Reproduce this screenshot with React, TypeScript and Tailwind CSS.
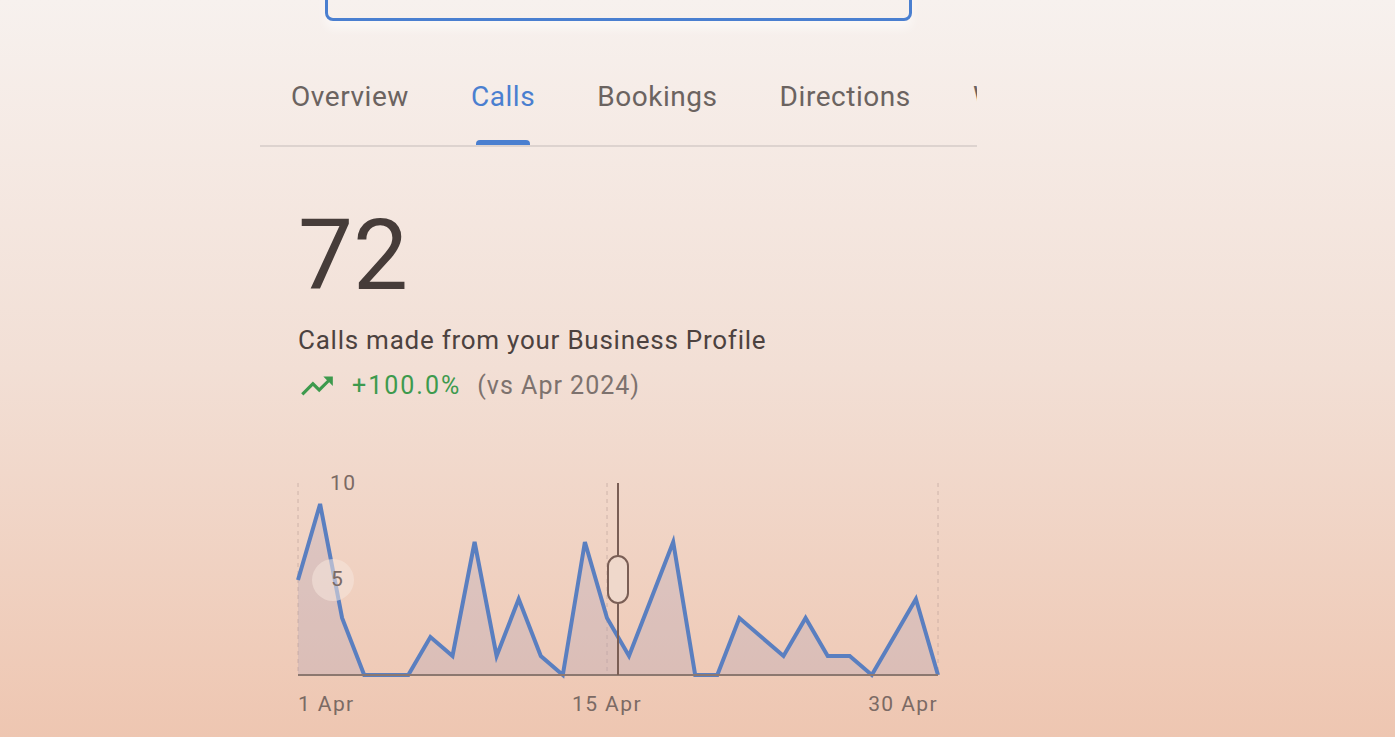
import React from 'react'

const calls = [5, 9, 3, 0, 0, 0, 2, 1, 7, 1, 4, 1, 0, 7, 3, 1, 4, 7, 0, 0, 3, 2, 1, 3, 1, 1, 0, 2, 4, 0]

const tabs = ['Overview', 'Calls', 'Bookings', 'Directions', 'Website clicks']

const W = 640
const BASE = 205
const UNIT = 19

function CallsChart() {
  const pts = calls.map((v, i) => [(i * W) / (calls.length - 1), BASE - v * UNIT])
  const line = pts.map(([x, y], i) => `${i ? 'L' : 'M'}${x.toFixed(1)} ${y}`).join(' ')
  const area = `${line} L${W} ${BASE} L0 ${BASE} Z`

  return (
    <svg width="660" height="250" viewBox="0 0 660 250" className="overflow-visible block">
      {[0, 309, W].map((x) => (
        <line key={x} x1={x} x2={x} y1={13} y2={BASE} stroke="#b89f96" strokeOpacity="0.6" strokeWidth="1" strokeDasharray="4 4" />
      ))}
      <path d={area} fill="#a99fb6" fillOpacity="0.28" />
      <path d={line} fill="none" stroke="#5a7fc0" strokeWidth="4" strokeLinejoin="miter" />
      <line x1={0} x2={W} y1={BASE} y2={BASE} stroke="#8c7870" strokeWidth="2" />
      <circle cx={35} cy={110} r={21} fill="#f6e6dd" fillOpacity="0.55" />
      <g fontSize="21" fill="#7b6a64" fontFamily="Roboto, sans-serif" letterSpacing="1.4">
        <text x={32} y={20}>10</text>
        <text x={33} y={116}>5</text>
        <text x={0} y={241}>1 Apr</text>
        <text x={309} y={241} textAnchor="middle">15 Apr</text>
        <text x={W} y={241} textAnchor="end">30 Apr</text>
      </g>
      <line x1={320} x2={320} y1={13} y2={BASE} stroke="#7a5e55" strokeWidth="2" />
      <rect x={310} y={86} width={20} height={47} rx={10} fill="#efd8cb" stroke="#7a5e55" strokeWidth="2" />
    </svg>
  )
}

export default function App() {
  return (
    <div className="h-[737px] w-full overflow-hidden bg-linear-to-b from-[#f7f1ee] via-[#f2dfd5] to-[#eec6b1] font-['Roboto',sans-serif]">
      <div className="ml-[260px] w-[717px]">
        <div className="ml-[65px] -mt-[39px] h-[60px] w-[587px] rounded-[8px] border-[3px] border-[#4a7fd0] shadow-[0_8px_10px_rgba(255,255,255,0.5)]" />

        <div className="flex overflow-hidden border-b-2 border-[#ddd3cf]">
          {tabs.map((t) => {
            const active = t === 'Calls'
            return (
              <div key={t} className="flex shrink-0 flex-col items-center px-[31px]">
                <span
                  className={`pt-[60px] text-[28px] leading-[32px] tracking-[0.55px] whitespace-nowrap ${
                    active ? 'text-[#4a7fd0]' : 'text-[#6b6360]'
                  }`}
                >
                  {t}
                </span>
                <div className={`mt-[27px] h-[5px] w-[54px] rounded-t-[4px] ${active ? 'bg-[#4a7fd0]' : 'bg-transparent'}`} />
              </div>
            )
          })}
        </div>

        <div className="pl-[38px]">
          <div className="mt-[60px] text-[98px] leading-[98px] text-[#463c39]">72</div>
          <div className="mt-[19px] text-[26px] leading-[32px] tracking-[0.75px] text-[#4c423f]">
            Calls made from your Business Profile
          </div>
          <div className="mt-[14px] flex h-[32px] items-center">
            <svg width="38" height="38" viewBox="0 0 24 24" className="shrink-0">
              <path fill="#3d9a4d" d="M16 6l2.29 2.29-4.88 4.88-4-4L2 16.59 3.41 18l6-6 4 4 6.3-6.29L22 12V6z" />
            </svg>
            <span className="ml-[16px] text-[25px] tracking-[2px] text-[#3d9a4d]">+100.0%</span>
            <span className="ml-[16px] text-[25px] tracking-[1px] text-[#7d726e]">(vs Apr 2024)</span>
          </div>
          <div className="mt-[68px]">
            <CallsChart />
          </div>
        </div>
      </div>
    </div>
  )
}
